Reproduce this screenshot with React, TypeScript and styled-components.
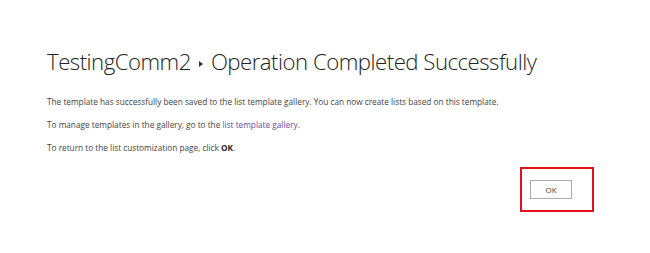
import styled, { createGlobalStyle } from "styled-components";

const GlobalStyle = createGlobalStyle`
    html, body {
        margin: 0;
        padding: 0;
        background: #ffffff;
    }
    body {
        font-family: "Open Sans", "Noto Sans", sans-serif;
    }
`;

const App = () => {
    return (
        <>
            <GlobalStyle />
            <Page>
                <Title>
                    <span>TestingComm2</span>
                    <Arrow>
                        <svg width="4" height="6" viewBox="0 0 4 6">
                            <path d="M0 0 L4 3 L0 6 Z" fill="#333" />
                        </svg>
                    </Arrow>
                    <span>Operation Completed Successfully</span>
                </Title>
                <Paragraph>
                    The template has successfully been saved to the list template gallery. You can now create lists based on this template.
                </Paragraph>
                <Paragraph>
                    To manage templates in the gallery, go to the <Link href="#">list template gallery</Link>.
                </Paragraph>
                <Paragraph>
                    To return to the list customization page, click <strong>OK</strong>.
                </Paragraph>
                <ButtonRow>
                    <Highlight>
                        <OkButton>OK</OkButton>
                    </Highlight>
                </ButtonRow>
            </Page>
        </>
    );
};

const Page = styled.div`
    width: 650px;
    height: 253px;
    box-sizing: border-box;
    padding: 44px 0 0 47px;
`;

const Title = styled.h1`
    display: flex;
    align-items: center;
    gap: 8px;

    margin: 0 0 15px 0;
    font-family: "Open Sans", sans-serif;
    font-size: 22.2px;
    font-weight: 300;
    line-height: 36px;
    letter-spacing: -0.5px;
    color: #222222;
`;

const Arrow = styled.span`
    display: flex;
    align-items: center;
    padding-top: 3px;
`;

const Paragraph = styled.p`
    margin: 0 0 10px 0;
    font-size: 8.25px;
    line-height: 13px;
    color: #444444;

    strong {
        font-weight: 700;
        color: #262626;
    }
`;

const Link = styled.a`
    color: #6a4c9c;
    text-decoration: none;
`;

const ButtonRow = styled.div`
    display: flex;
    justify-content: flex-end;
    width: 547px;
    margin-top: 13px;
`;

const Highlight = styled.div`
    display: flex;
    padding: 11px 20px 11px 8px;
    border: 2.5px solid #e2101f;
`;

const OkButton = styled.button`
    width: 42px;
    height: 19px;
    padding: 0;
    border: 1px solid #ababab;
    background: #fdfdfd;
    font-family: "Open Sans", sans-serif;
    font-size: 8px;
    color: #444444;
`;

export default App;
